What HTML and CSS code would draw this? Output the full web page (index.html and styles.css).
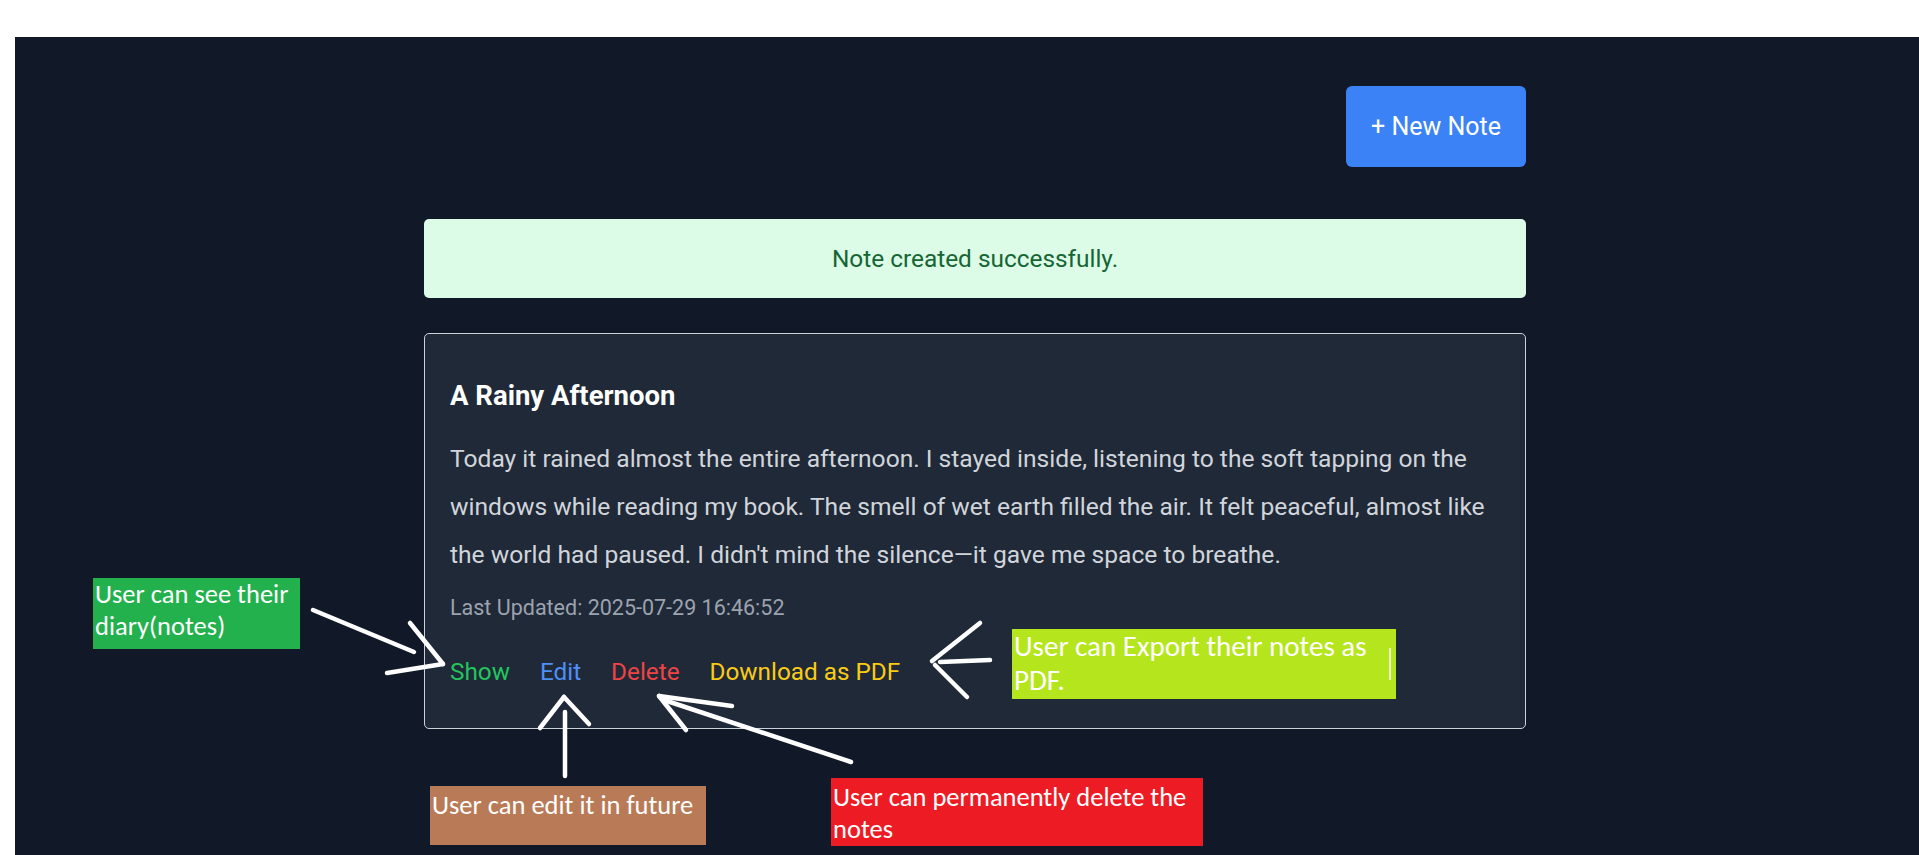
FILE: index.html
```html
<!DOCTYPE html>
<html lang="en">
<head>
<meta charset="utf-8">
<title>Notes</title>
<link rel="stylesheet" href="styles.css">
</head>
<body>
<div class="frame">
  <main class="app">
    <div class="content">
      <div class="toolbar">
        <a class="btn-new" href="#">+ New Note</a>
      </div>
      <div class="alert">Note created successfully.</div>
      <article class="card">
        <h2 class="card-title">A Rainy Afternoon</h2>
        <p class="card-body">Today it rained almost the entire afternoon. I stayed inside, listening to the soft tapping on the windows while reading my book. The smell of wet earth filled the air. It felt peaceful, almost like the world had paused. I didn't mind the silence—it gave me space to breathe.</p>
        <p class="card-meta">Last Updated: 2025-07-29 16:46:52</p>
        <div class="card-actions">
          <a class="act act-show" href="#">Show</a>
          <a class="act act-edit" href="#">Edit</a>
          <a class="act act-delete" href="#">Delete</a>
          <a class="act act-pdf" href="#">Download as PDF</a>
        </div>
      </article>
    </div>
  </main>

  <div class="annotations">
    <svg class="arrows" width="1919" height="855" viewBox="0 0 1919 855">
      <g fill="none" stroke="#fff" stroke-width="4.5" stroke-linecap="round">
        <line x1="313" y1="610" x2="414" y2="652"/>
        <line x1="410" y1="623" x2="443" y2="664"/>
        <line x1="387" y1="673" x2="443" y2="664"/>

        <line x1="565" y1="712" x2="565" y2="776"/>
        <line x1="564" y1="697" x2="540" y2="728"/>
        <line x1="564" y1="697" x2="589" y2="724"/>

        <line x1="664" y1="700" x2="851" y2="762"/>
        <line x1="659" y1="696" x2="732" y2="706"/>
        <line x1="659" y1="696" x2="686" y2="730"/>

        <line x1="940" y1="662" x2="990" y2="660"/>
        <line x1="980" y1="623" x2="932" y2="661"/>
        <line x1="967" y1="697" x2="935" y2="665"/>
      </g>
    </svg>
    <div class="note note-show">User can see their diary(notes)</div>
    <div class="note note-pdf">User can Export their notes as PDF.<span class="caret"></span></div>
    <div class="note note-edit">User can edit it in future</div>
    <div class="note note-delete">User can permanently delete the notes</div>
  </div>
</div>
</body>
</html>
```

FILE: styles.css
```css
html, body {
  margin: 0;
  padding: 0;
  background: #ffffff;
  overflow: hidden;
}

.frame {
  position: relative;
  width: 1919px;
  height: 855px;
  padding: 37px 0 0 15px;
  box-sizing: border-box;
}

.app {
  height: 100%;
  background: #111827;
  padding: 49px 0 0 409px;
  box-sizing: border-box;
  font-family: Roboto, "Liberation Sans", sans-serif;
}

.content {
  width: 1102px;
}

.toolbar {
  display: flex;
  justify-content: flex-end;
}

.btn-new {
  display: inline-block;
  background: #3b82f6;
  color: #ffffff;
  text-decoration: none;
  font-size: 25px;
  line-height: 33px;
  padding: 24px 25px;
  border-radius: 6px;
}

.alert {
  margin-top: 52px;
  background: #dcfce7;
  color: #166534;
  text-align: center;
  font-size: 24.4px;
  line-height: 33px;
  padding: 23px 0;
  border-radius: 5px;
}

.card {
  margin-top: 35px;
  background: #1f2937;
  border: 1px solid #cbd2da;
  border-radius: 5px;
  padding: 44px 25px 41px;
}

.card-title {
  margin: 0;
  color: #ffffff;
  font-size: 27.5px;
  line-height: 36px;
  font-weight: 700;
}

.card-body {
  margin: 21px 0 0;
  color: #d1d5db;
  font-size: 24.6px;
  line-height: 48px;
}

.card-meta {
  margin: 15px 0 0;
  color: #9ca3af;
  font-size: 21.5px;
  line-height: 28px;
}

.card-actions {
  margin-top: 35px;
  display: flex;
  gap: 30px;
  font-size: 24.3px;
  line-height: 30px;
}

.act {
  text-decoration: none;
}

.act-show { color: #22c55e; }
.act-edit { color: #4f8ff7; }
.act-delete { color: #ef4444; }
.act-pdf { color: #facc15; }

/* annotation layer laid over the screenshot */
.annotations {
  position: absolute;
  inset: 0;
  pointer-events: none;
}

.arrows {
  position: absolute;
  left: 0;
  top: 0;
}

.note {
  position: absolute;
  box-sizing: border-box;
  color: #ffffff;
  font-family: Carlito, Lato, "Open Sans", sans-serif;
  font-size: 26.5px;
  line-height: 32px;
  padding: 0 2px;
}

.note-show {
  left: 93px;
  top: 578px;
  width: 207px;
  height: 71px;
  background: #22b14c;
}

.note-pdf {
  left: 1012px;
  top: 629px;
  width: 384px;
  height: 70px;
  background: #b5e61d;
  font-size: 29px;
  line-height: 34px;
  padding-right: 12px;
}

.caret {
  position: absolute;
  left: 377px;
  top: 19px;
  width: 2px;
  height: 32px;
  background: rgba(255, 255, 255, 0.75);
}

.note-edit {
  left: 430px;
  top: 786px;
  width: 276px;
  height: 59px;
  background: #b97a57;
  padding-top: 3px;
}

.note-delete {
  left: 831px;
  top: 778px;
  width: 372px;
  height: 68px;
  background: #ed1c24;
  padding-top: 3px;
}
```
